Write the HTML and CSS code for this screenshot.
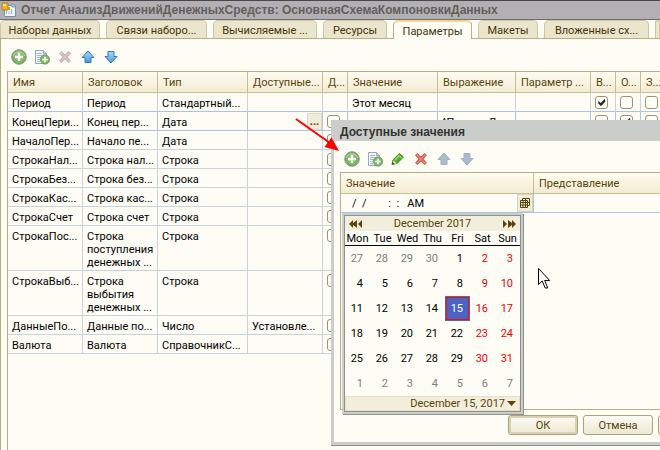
FILE: index.html
```html
<!DOCTYPE html>
<html lang="ru">
<head>
<meta charset="utf-8">
<title>Отчет АнализДвиженийДенежныхСредств</title>
<link rel="stylesheet" href="styles.css">
</head>
<body>
<svg class="defs" aria-hidden="true">
  <defs>
    <radialGradient id="green" cx=".5" cy=".5" r=".55">
      <stop offset="0" stop-color="#86c95f"/><stop offset=".65" stop-color="#7dbb62"/><stop offset="1" stop-color="#6f9468"/>
    </radialGradient>
    <linearGradient id="blue" x1="0" y1="0" x2="0" y2="1">
      <stop offset="0" stop-color="#a5dcf8"/><stop offset="1" stop-color="#3f9be0"/>
    </linearGradient>
    <symbol id="add" viewBox="0 0 16 16">
      <circle cx="8" cy="8" r="7.3" fill="url(#green)" stroke="#8c9c88"/>
      <path d="M2.500 7a5.600 5 0 0 1 11 0" fill="none" stroke="#b9dba8" stroke-width="1"/>
      <path d="M6.800 4h2.400v2.800H12v2.400H9.200V12H6.800V9.200H4V6.800h2.800z" fill="#fff"/>
    </symbol>
    <symbol id="copy" viewBox="0 0 16 16">
      <path d="M1.500 1.500h8l3 3v10h-11z" fill="#f3f8fc" stroke="#8fa9bd"/>
      <path d="M9.500 1.500v3h3" fill="#d5e3ee" stroke="#8fa9bd"/>
      <path d="M3 4.500h5M3 6.500h7M3 8.500h5M3 10.500h3M3 12.500h3" stroke="#9fb8ca"/>
      <circle cx="11" cy="10.500" r="4.700" fill="url(#green)" stroke="#7c9a74" stroke-width=".8"/>
      <path d="M10.200 7.700h1.600v2h2v1.600h-2v2h-1.600v-2h-2V9.700h2z" fill="#fff"/>
    </symbol>
    <symbol id="cross" viewBox="0 0 16 16">
      <path d="M2.500 4 4.500 2.500 8 6l3.500-3.500L13.500 4l-3.300 4 3.300 4-2 1.500L8 10l-3.500 3.500-2-1.500 3.300-4z" fill="currentColor" stroke="currentColor" stroke-linejoin="round"/>
      <path d="M4 4l8 8M12 4l-8 8" stroke="#fff" stroke-opacity=".25"/>
    </symbol>
    <symbol id="up" viewBox="0 0 16 16">
      <path d="M8 2l6 6.500h-3V13.500H5V8.500H2z" stroke-linejoin="round"/>
    </symbol>
    <symbol id="down" viewBox="0 0 16 16">
      <path d="M8 14l6-6.500h-3V2.500H5V7.500H2z" stroke-linejoin="round"/>
    </symbol>
    <symbol id="pencil" viewBox="0 0 16 16">
      <path d="M2 13.500 3 9l6.500-6.500L13.500 6 7 12.500z" fill="#55ac2c" stroke="#3d8a20" stroke-linejoin="round"/>
      <path d="M8.500 4l3.500 3.500" stroke="#c9ecae"/>
      <path d="M4.500 9.500l4.500-4.500" stroke="#9bdc6c" stroke-width="1.500"/>
      <path d="M2 13.500l.6-2.700 2.200 2z" fill="#2e5c1e"/>
      <path d="M3.200 9.500l3.500 2.800-1.700.7-2-1.600z" fill="#f0e6b8"/>
    </symbol>
  </defs>
</svg>

<main class="app">
  <header class="titlebar">
    <svg class="appicon" viewBox="0 0 16 18" aria-hidden="true">
      <path d="M3.500 4.500h11v11h-11z" fill="#f4f9ff" stroke="#6f8fb5"/>
      <path d="M11 2.500l3.500 3.500H11z" fill="#c3d7ec" stroke="#6f8fb5" stroke-width=".7"/>
      <path d="M5.500 13V9M8 13v-2.500M10.500 13V8" stroke="#8fb3d6"/>
      <path d="M1 2h6v7H1z" fill="#f0b429" stroke="#a87400" stroke-width=".8"/>
      <path d="M2 3h3v2H2z" fill="#ffe49a"/>
      <path d="M6 6h3v3H6z" fill="#d99a1b"/>
    </svg>
    <h1>Отчет АнализДвиженийДенежныхСредств: ОсновнаяСхемаКомпоновкиДанных</h1>
  </header>

  <nav class="tabs" role="tablist">
    <button class="tab" role="tab">Наборы данных</button>
    <button class="tab" role="tab">Связи наборо...</button>
    <button class="tab" role="tab">Вычисляемые ...</button>
    <button class="tab" role="tab">Ресурсы</button>
    <button class="tab active" role="tab" aria-selected="true">Параметры</button>
    <button class="tab" role="tab">Макеты</button>
    <button class="tab" role="tab">Вложенные сх...</button>
    <button class="tab" role="tab" aria-label="Настройки"></button>
  </nav>

  <section class="page">
    <div class="toolbar">
      <button class="tool" aria-label="Добавить"><svg><use href="#add"/></svg></button>
      <button class="tool" aria-label="Скопировать"><svg><use href="#copy"/></svg></button>
      <button class="tool faded" aria-label="Удалить"><svg><use href="#cross"/></svg></button>
      <button class="tool arrow" aria-label="Вверх"><svg><use href="#up"/></svg></button>
      <button class="tool arrow" aria-label="Вниз"><svg><use href="#down"/></svg></button>
    </div>

    <div class="gridbox">
      <table class="params">
        <colgroup>
          <col class="w75"><col class="w75"><col class="w90"><col class="w75"><col class="w25"><col class="w90"><col class="w78"><col class="w75"><col class="w25"><col class="w25"><col class="w25">
        </colgroup>
        <thead>
          <tr><th>Имя</th><th>Заголовок</th><th>Тип</th><th>Доступные...</th><th>Д...</th><th>Значение</th><th>Выражение</th><th>Параметр ...</th><th>В...</th><th>О...</th><th>З...</th></tr>
        </thead>
        <tbody>
          <tr><td>Период</td><td>Период</td><td>Стандартный...</td><td></td><td></td><td>Этот месяц</td><td></td><td></td><td class="tick"><input type="checkbox" checked aria-label="Включать"></td><td class="tick"><input type="checkbox" aria-label="Ограничение"></td><td class="tick"><input type="checkbox" aria-label="Запрет"></td></tr>
          <tr class="current"><td>КонецПери...</td><td>Конец пер...</td><td>Дата</td><td class="choose"><button aria-label="Выбрать">...</button></td><td class="tick"><input type="checkbox" aria-label="Список"></td><td></td><td>^Период.Дата</td><td></td><td class="tick"><input type="checkbox" aria-label="Включать"></td><td class="tick"><input type="checkbox" checked aria-label="Ограничение"></td><td class="tick"><input type="checkbox" aria-label="Запрет"></td></tr>
          <tr><td>НачалоПер...</td><td>Начало пе...</td><td>Дата</td><td></td><td class="tick"><input type="checkbox" aria-label="Список"></td><td></td><td></td><td></td><td></td><td></td><td></td></tr>
          <tr><td>СтрокаНал...</td><td>Строка нал...</td><td>Строка</td><td></td><td class="tick"><input type="checkbox" aria-label="Список"></td><td></td><td></td><td></td><td></td><td></td><td></td></tr>
          <tr><td>СтрокаБез...</td><td>Строка без...</td><td>Строка</td><td></td><td class="tick"><input type="checkbox" aria-label="Список"></td><td></td><td></td><td></td><td></td><td></td><td></td></tr>
          <tr><td>СтрокаКас...</td><td>Строка кас...</td><td>Строка</td><td></td><td class="tick"><input type="checkbox" aria-label="Список"></td><td></td><td></td><td></td><td></td><td></td><td></td></tr>
          <tr><td>СтрокаСчет</td><td>Строка счет</td><td>Строка</td><td></td><td class="tick"><input type="checkbox" aria-label="Список"></td><td></td><td></td><td></td><td></td><td></td><td></td></tr>
          <tr><td>СтрокаПос...</td><td>Строка<br>поступления<br>денежных ...</td><td>Строка</td><td></td><td class="tick"><input type="checkbox" aria-label="Список"></td><td></td><td></td><td></td><td></td><td></td><td></td></tr>
          <tr><td>СтрокаВыб...</td><td>Строка<br>выбытия<br>денежных ...</td><td>Строка</td><td></td><td class="tick"><input type="checkbox" aria-label="Список"></td><td></td><td></td><td></td><td></td><td></td><td></td></tr>
          <tr><td>ДанныеПо...</td><td>Данные по...</td><td>Число</td><td>Установле...</td><td class="tick"><input type="checkbox" aria-label="Список"></td><td></td><td></td><td></td><td></td><td></td><td></td></tr>
          <tr><td>Валюта</td><td>Валюта</td><td>СправочникС...</td><td></td><td class="tick"><input type="checkbox" aria-label="Список"></td><td></td><td></td><td></td><td></td><td></td><td></td></tr>
        </tbody>
      </table>
    </div>
  </section>

  <section class="dialog" role="dialog" aria-labelledby="dlg-title">
    <h2 id="dlg-title">Доступные значения</h2>
    <div class="dialog-body">
      <div class="toolbar">
        <button class="tool" aria-label="Добавить"><svg><use href="#add"/></svg></button>
        <button class="tool" aria-label="Скопировать"><svg><use href="#copy"/></svg></button>
        <button class="tool" aria-label="Изменить"><svg><use href="#pencil"/></svg></button>
        <button class="tool danger" aria-label="Удалить"><svg><use href="#cross"/></svg></button>
        <button class="tool arrow off" aria-label="Вверх"><svg><use href="#up"/></svg></button>
        <button class="tool arrow off" aria-label="Вниз"><svg><use href="#down"/></svg></button>
      </div>
      <div class="valuebox">
        <table class="values">
          <colgroup><col class="w193"><col></colgroup>
          <thead><tr><th>Значение</th><th>Представление</th></tr></thead>
          <tbody>
            <tr>
              <td><div class="editor">
                <input type="text" aria-label="Значение" value="/  /        :  :   AM">
                <button class="pick" aria-label="Календарь">
                  <svg viewBox="0 0 12 12"><path d="M3.500 3V1.500h7v7H9M1.500 3.500h7v7h-7zM1.500 5.500h9M1.500 8h7M4 3.500v7M6.500 1.500v9" fill="none" stroke="#5a4408"/></svg>
                </button>
              </div></td>
              <td></td>
            </tr>
          </tbody>
        </table>
      </div>
      <footer class="actions">
        <button class="action default">ОК</button>
        <button class="action">Отмена</button>
        <button class="action" aria-label="Справка"></button>
      </footer>
    </div>

    <div class="calendar">
      <div class="calhead">
        <button aria-label="Назад"><svg class="nav" viewBox="0 0 14 8"><path d="M4 0v3l4-3v8L4 5v3L0 4zM13 0v8L9 4z"/></svg></button>
        <span>December 2017</span>
        <button aria-label="Вперед"><svg class="nav" viewBox="0 0 14 8"><path d="M1 0v8l4-4zM6 0v8l4-3v3l4-4-4-4v3z"/></svg></button>
      </div>
      <table class="days">
        <thead><tr><th>Mon</th><th>Tue</th><th>Wed</th><th>Thu</th><th>Fri</th><th>Sat</th><th>Sun</th></tr></thead>
        <tbody>
          <tr><td class="other">27</td><td class="other">28</td><td class="other">29</td><td class="other">30</td><td>1</td><td class="off">2</td><td class="off">3</td></tr>
          <tr><td>4</td><td>5</td><td>6</td><td>7</td><td>8</td><td class="off">9</td><td class="off">10</td></tr>
          <tr><td>11</td><td>12</td><td>13</td><td>14</td><td class="today">15</td><td class="off">16</td><td class="off">17</td></tr>
          <tr><td>18</td><td>19</td><td>20</td><td>21</td><td>22</td><td class="off">23</td><td class="off">24</td></tr>
          <tr><td>25</td><td>26</td><td>27</td><td>28</td><td>29</td><td class="off">30</td><td class="off">31</td></tr>
          <tr><td class="other">1</td><td class="other">2</td><td class="other">3</td><td class="other">4</td><td class="other">5</td><td class="other">6</td><td class="other">7</td></tr>
        </tbody>
      </table>
      <button class="calfoot"><span>December 15, 2017</span><svg viewBox="0 0 9 5"><path d="M0 0h9L4.500 5z"/></svg></button>
    </div>
  </section>

  <svg class="pointer" viewBox="0 0 46 36" aria-hidden="true">
    <path d="M1 1l34 24" stroke="#f00" stroke-width="2"/>
    <path d="M44 33l-14.500-4 7-9.500z" fill="#f00"/>
  </svg>
  <svg class="cursor" viewBox="0 0 13 21" aria-hidden="true">
    <path d="M.5.500v16l3.700-3.500 3 7h2.500l-3-7.500h5z" fill="#fff" stroke="#000"/>
  </svg>
</main>
</body>
</html>
```
FILE: styles.css
```css
* { box-sizing: border-box; }

body {
  margin: 0;
  background: #fdfcf5;
  color: #000;
  font: 11px/13px Roboto, sans-serif;
}

button, input {
  margin: 0;
  padding: 0;
  border: 0;
  background: none;
  color: inherit;
  font: inherit;
}

h1, h2 { margin: 0; font: bold 12px/13px "Liberation Sans", sans-serif; }
table { border-collapse: separate; border-spacing: 0; table-layout: fixed; }
th { font-weight: normal; text-align: left; }
svg { display: block; }

.defs { position: absolute; width: 0; height: 0; }

.app {
  position: relative;
  display: flex;
  flex-direction: column;
  min-height: 100vh;
  overflow: hidden;
}

.titlebar {
  display: flex;
  align-items: center;
  gap: 4px;
  height: 20px;
  padding-left: 1px;
  border-top: 1px solid #4a464c;
  border-bottom: 1px solid #716d72;
  background: #b3b0b4;
  color: #5f605c;
}

.titlebar h1 { white-space: nowrap; }
.appicon { width: 16px; height: 18px; }

.tabs {
  display: grid;
  grid-template-columns: 100px 101px 104px 64px 79px 60px 105px 1fr;
  gap: 6px;
  height: 19px;
  border-bottom: 1px solid #b5ae82;
}

.tab {
  height: 18px;
  padding-top: 1px;
  border: 1px solid #cdc6a2;
  border-bottom: 0;
  border-radius: 5px 5px 0 0;
  background: #ebe5cd;
  color: #443508;
  white-space: nowrap;
}

.tab.active {
  height: 19px;
  border-color: #b5ae82;
  border-top: 2px solid #fbd58c;
  background: #fdfcf5;
}

.page {
  display: flex;
  flex: 1;
  flex-direction: column;
  padding-left: 6px;
  border-left: 1px solid #b5ae82;
}

.toolbar {
  display: flex;
  align-items: center;
  gap: 7px;
  height: 32px;
  padding: 4px 0 0 4px;
}

.tool, .tool svg { width: 16px; height: 16px; }
.faded { color: #cbb8b8; }
.danger { color: #e2675a; }
.arrow { fill: url(#blue); stroke: #3c79b4; }
.arrow.off { fill: #a9bccd; stroke: #9fb0c2; }

.gridbox {
  flex: 1;
  border-top: 1px solid #b5ae82;
  border-left: 1px solid #b5ae82;
}

.params { width: 658px; }
.w25 { width: 25px; }
.w75 { width: 75px; }
.w78 { width: 78px; }
.w90 { width: 90px; }
.w193 { width: 193px; }

.params th, .values th {
  height: 21px;
  padding: 1px 0 0 5px;
  border-right: 1px solid #c5bf98;
  border-bottom: 1px solid #c5bf98;
  background: linear-gradient(#fdfcf2, #f4ebd2);
  color: #5a4408;
  white-space: nowrap;
}

.params td {
  height: 19px;
  padding: 4px 0 1px 4px;
  border-right: 1px solid #c9d3da;
  border-bottom: 1px solid #c9d3da;
  vertical-align: top;
  white-space: nowrap;
}

.params tr:first-child td, .params .current td { border-bottom-color: #adc4e0; }
.params .current td { border-right-color: #adc4e0; }
.params .tick { padding: 3px 0 0 4px; }

input[type="checkbox"] {
  display: block;
  width: 13px;
  height: 13px;
  appearance: none;
  border: 1px solid #9d946e;
  border-radius: 3px;
  background: #fffef8;
}

input[type="checkbox"]:checked::before {
  display: block;
  height: 11px;
  background: #2b2b2b;
  clip-path: polygon(20% 35%, 42% 55%, 80% 15%, 86% 40%, 45% 85%, 20% 60%);
  content: "";
}

.params .choose { padding: 1px 0 0; }

.choose button {
  display: block;
  width: 15px;
  height: 17px;
  margin-left: auto;
  border: 1px solid #dfdac2;
  background: #f1ecd8;
  color: #5a4408;
  font-weight: bold;
}

.dialog {
  position: absolute;
  top: 120px;
  right: -72px;
  left: 331px;
  border: 3px solid #cacdca;
  border-top: 0;
  box-shadow: 0 1px #8f918f;
  background: #fdfcf5;
}

.dialog h2 {
  height: 21px;
  padding: 6px 0 0 6px;
  background: #cacdca;
  color: #333;
  white-space: nowrap;
}

.dialog-body { padding: 0 6px 7px; }
.dialog .toolbar { height: 31px; padding-left: 4px; }

.valuebox {
  height: 238px;
  border: 1px solid #b5ae82;
}

.values { width: 100%; }

.values td {
  height: 19px;
  padding: 0;
  border-bottom: 1px solid #adc4e0;
  border-right: 1px solid #adc4e0;
}

.editor { display: flex; height: 18px; padding-left: 11px; }
.editor input { flex: 1; min-width: 0; outline: 0; }

.pick {
  width: 16px;
  border: 1px solid #d9d3b8;
  background: #f1ecd8;
}

.pick svg { width: 12px; height: 12px; margin: auto; }

.actions { display: flex; gap: 5px; padding: 5px 0 0 168px; }

.action {
  flex: none;
  width: 70px;
  height: 20px;
  border: 1px solid #aba37a;
  border-radius: 3px;
  background: linear-gradient(#fdfcf5, #ece7d0);
  color: #5a4408;
}

.action.default { box-shadow: inset 0 0 0 2px #d9d2b2; }

.calendar {
  position: absolute;
  top: 93px;
  left: 8px;
  width: 181px;
  border: 2px solid #cacdca;
  outline: 1px solid #8f918f;
  outline-offset: -3px;
  padding: 1px;
  box-shadow: 1px 1px #8f918f;
  background: #fdfcf5;
}

.calhead {
  display: flex;
  align-items: center;
  justify-content: space-between;
  height: 15px;
  padding: 0 4px;
  background: #f3eedb;
  color: #5a4408;
}

.nav { width: 14px; height: 8px; fill: #5a4408; }

.days { width: 100%; }

.days th {
  height: 15px;
  padding: 0;
  border-bottom: 1px solid #000;
  text-align: center;
}

.days td {
  height: 25px;
  padding: 0 7px 0 0;
  text-align: right;
}

.days .other { color: #7d7d7d; }
.days .off { color: #f00000; }

.days .today {
  padding-right: 6px;
  border: 1px dotted #8a6a20;
  box-shadow: inset 0 0 0 1px #e01030;
  background: #4d63c4;
  color: #fff;
}

.calfoot {
  display: flex;
  align-items: center;
  justify-content: flex-end;
  gap: 2px;
  width: 100%;
  height: 15px;
  padding-right: 3px;
  border: 1px solid #e6dfc4;
  background: #f3eedb;
  color: #5a4408;
}

.calfoot svg { width: 9px; height: 5px; fill: #5a4408; }

.pointer {
  position: absolute;
  top: 118px;
  left: 295px;
  width: 46px;
  height: 36px;
}

.cursor {
  position: absolute;
  top: 268px;
  left: 538px;
  width: 13px;
  height: 21px;
}
```
